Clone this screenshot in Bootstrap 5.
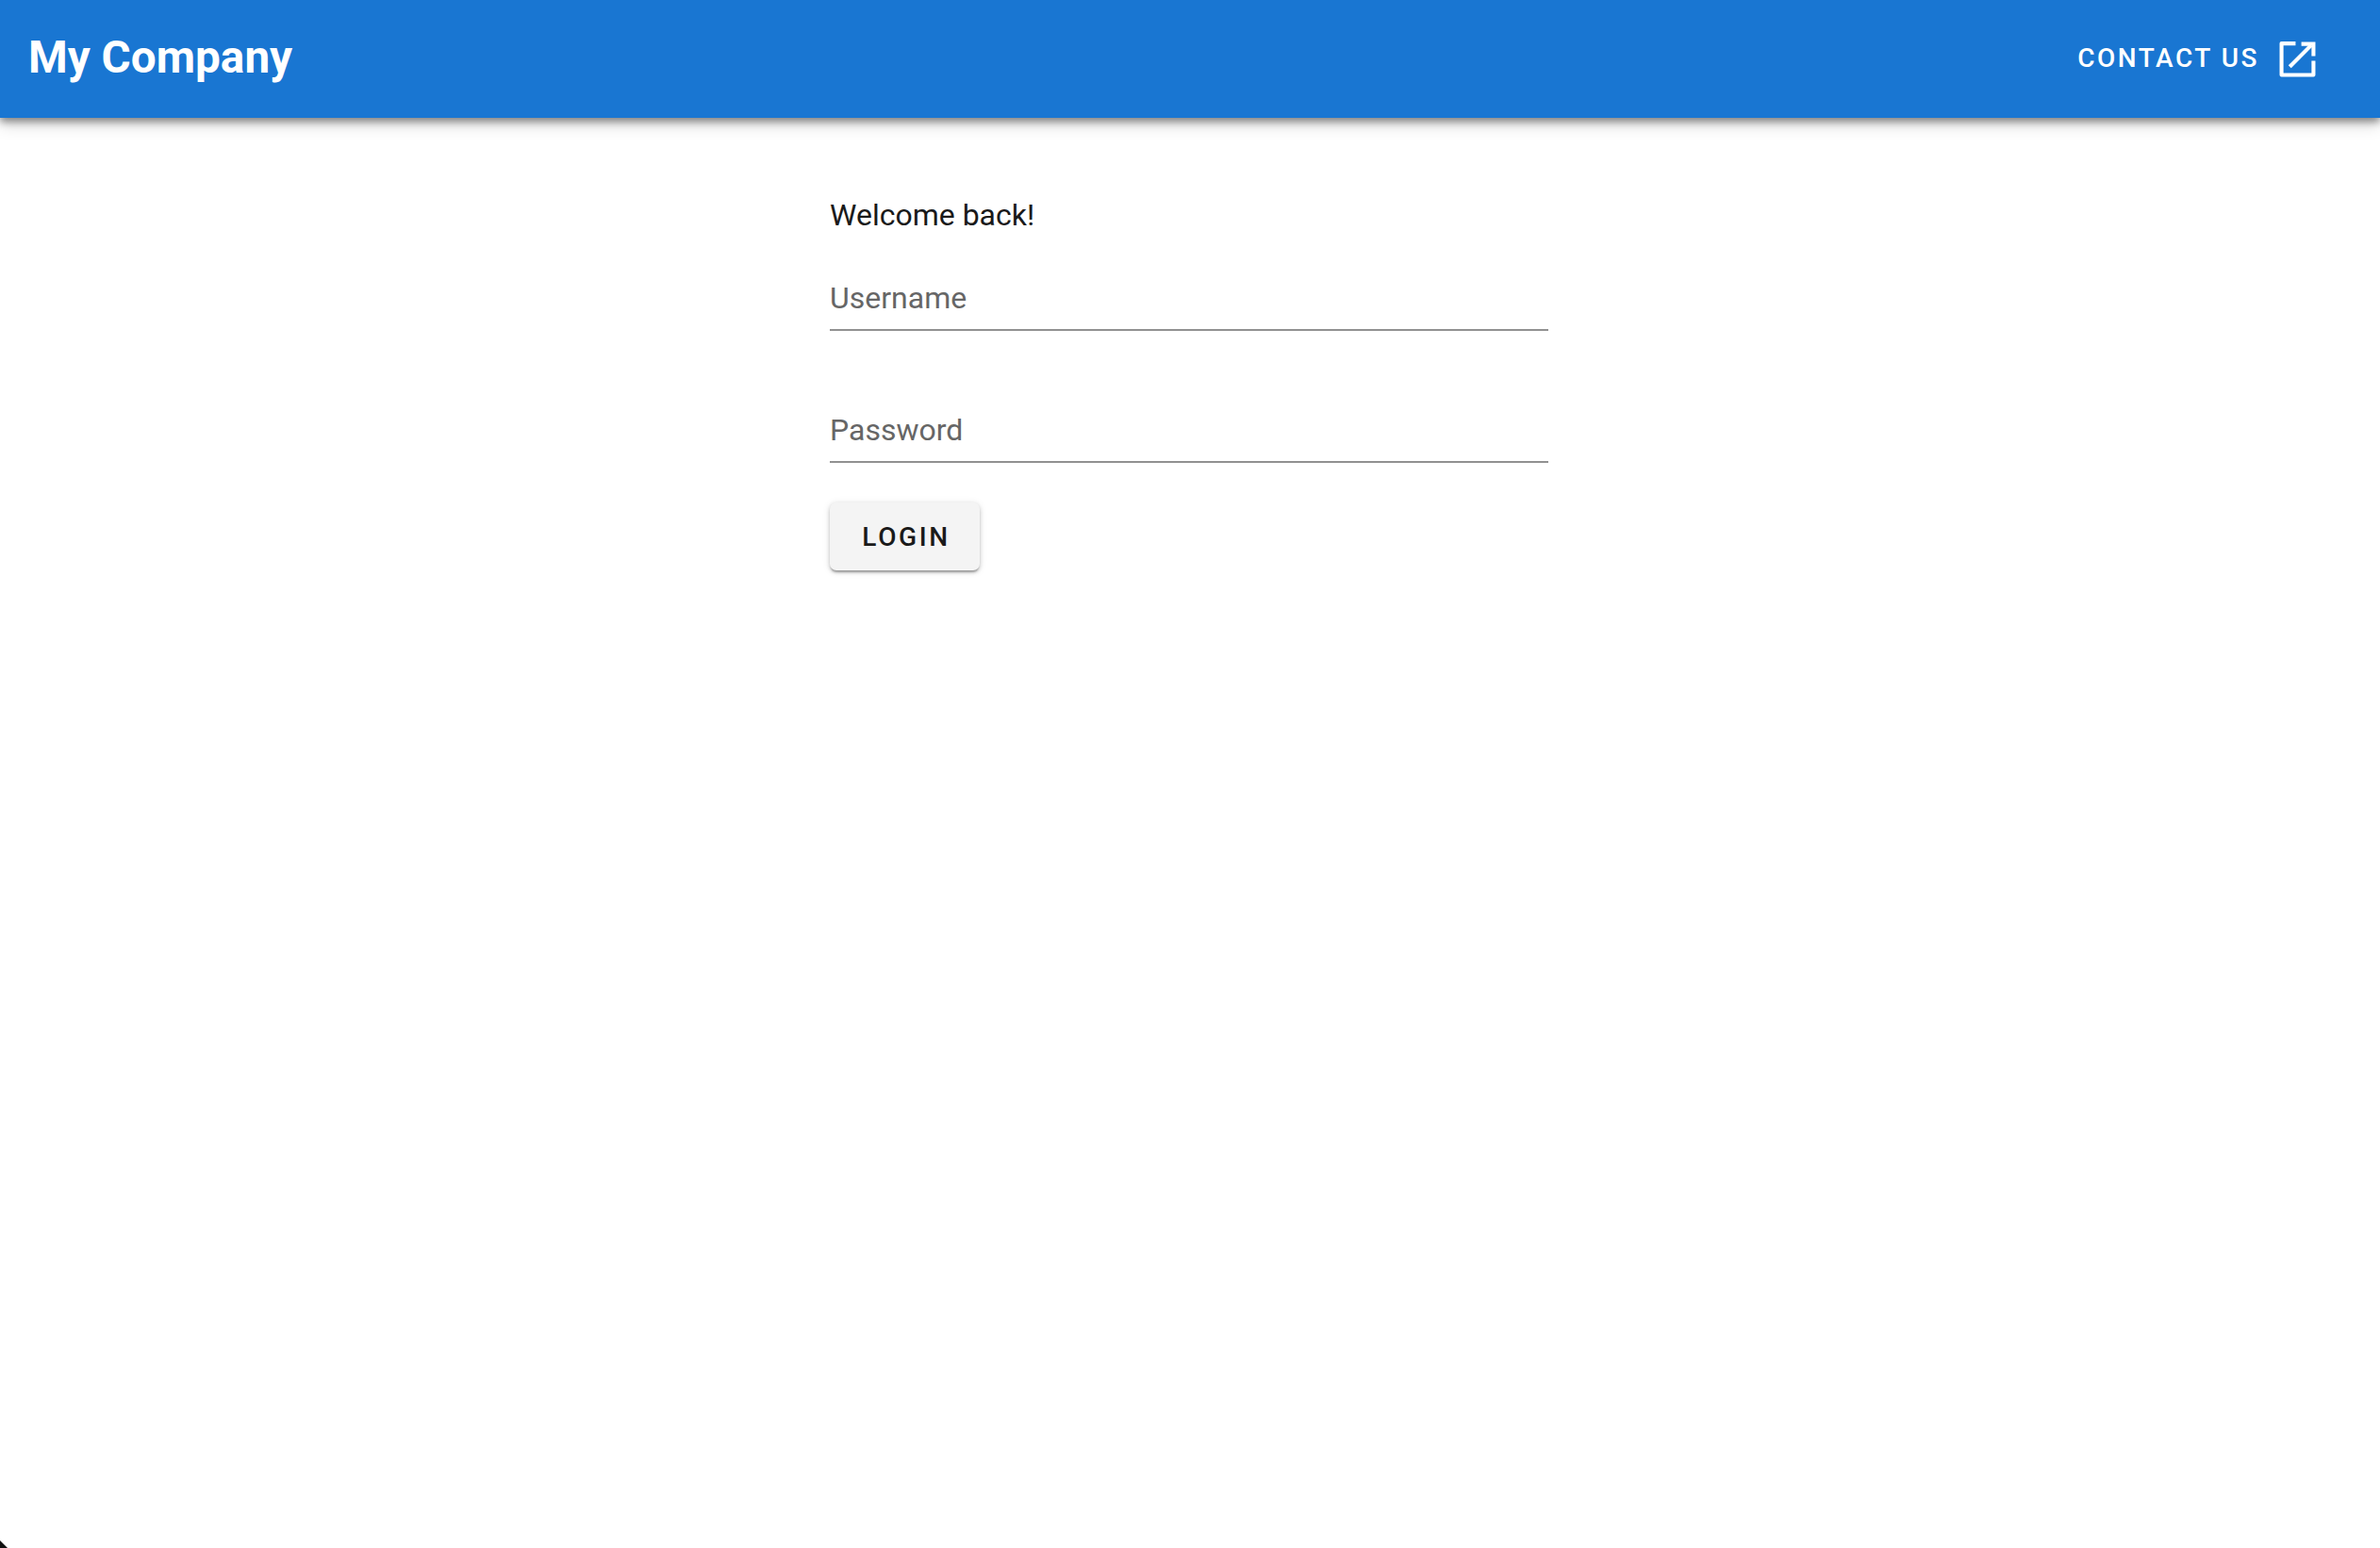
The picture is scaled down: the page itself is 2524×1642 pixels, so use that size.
<!DOCTYPE html>
<html lang="en">
<head>
<meta charset="utf-8">
<title>My Company</title>
<link href="https://cdn.jsdelivr.net/npm/bootstrap@5.3.0/dist/css/bootstrap.min.css" rel="stylesheet">
<style>
html, body { height: 100%; }
body { font-family: Roboto, "Liberation Sans", sans-serif; background: #fff; color: #1a1a1a; overflow: hidden; }
.top-bar { height: 125px; background: #1976d2; padding: 0 68px 1px 30px; box-shadow: 0 4px 8px rgba(0,0,0,.42), 0 8px 16px rgba(0,0,0,.14); position: relative; }
.brand-name { font-size: 47.7px; font-weight: 700; color: #fff; letter-spacing: 0; line-height: 1; margin: 0; text-decoration: none; }
.contact-link { color: #fff; font-size: 28px; font-weight: 500; letter-spacing: 2.5px; text-transform: uppercase; text-decoration: none; gap: 21px; }
.contact-link svg { width: 39px; height: 39px; }
.login-box { width: 762px; margin: 0 0 0 880px; padding-top: 81px; }
.welcome-text { font-size: 32px; line-height: 44px; margin: 0 0 35px; color: #1a1a1a; }
.line-input { display: block; width: 100%; height: 66px; border: 0; border-bottom: 2px solid #919191; border-radius: 0; padding: 0 0 2px; font-size: 32px; background: transparent; color: #1a1a1a; box-shadow: none; margin-bottom: 74px; }
.line-input::placeholder { color: #666; opacity: 1; }
.line-input:focus { box-shadow: none; border-bottom-color: #1976d2; }
.password-input { margin-bottom: 42px; }
.login-btn { width: 159px; height: 72px; padding: 1px 0 0 3px; font-size: 28px; font-weight: 500; letter-spacing: 2.6px; color: #1a1a1a; background: #f4f4f4; border: 0; border-radius: 7px; box-shadow: 0 3px 2px -1px rgba(0,0,0,.25), 0 2px 4px rgba(0,0,0,.18), 0 1px 8px rgba(0,0,0,.1); }
.corner-mark { position: fixed; left: 0; bottom: 0; width: 8px; height: 8px; background: #111; clip-path: polygon(0 0, 100% 100%, 0 100%); }
</style>
</head>
<body>
<header class="top-bar d-flex align-items-center justify-content-between">
  <a class="brand-name" href="#">My Company</a>
  <a class="contact-link d-flex align-items-center" href="#">
    <span>Contact us</span>
    <svg viewBox="0 0 38 38" fill="none" stroke="#fff" stroke-width="4" aria-hidden="true">
      <path d="M17 3H2.500v32.500H35.500V21" stroke-linejoin="round"/>
      <path d="M11 27L33 5"/>
      <path d="M23 3.500h12.500V16"/>
    </svg>
  </a>
</header>
<main class="login-box">
  <p class="welcome-text">Welcome back!</p>
  <form>
    <input class="form-control line-input" type="text" placeholder="Username" aria-label="Username">
    <input class="form-control line-input password-input" type="password" placeholder="Password" aria-label="Password">
    <button class="btn login-btn" type="button">LOGIN</button>
  </form>
</main>
<div class="corner-mark"></div>
<script src="https://cdn.jsdelivr.net/npm/bootstrap@5.3.0/dist/js/bootstrap.bundle.min.js"></script>
</body>
</html>
